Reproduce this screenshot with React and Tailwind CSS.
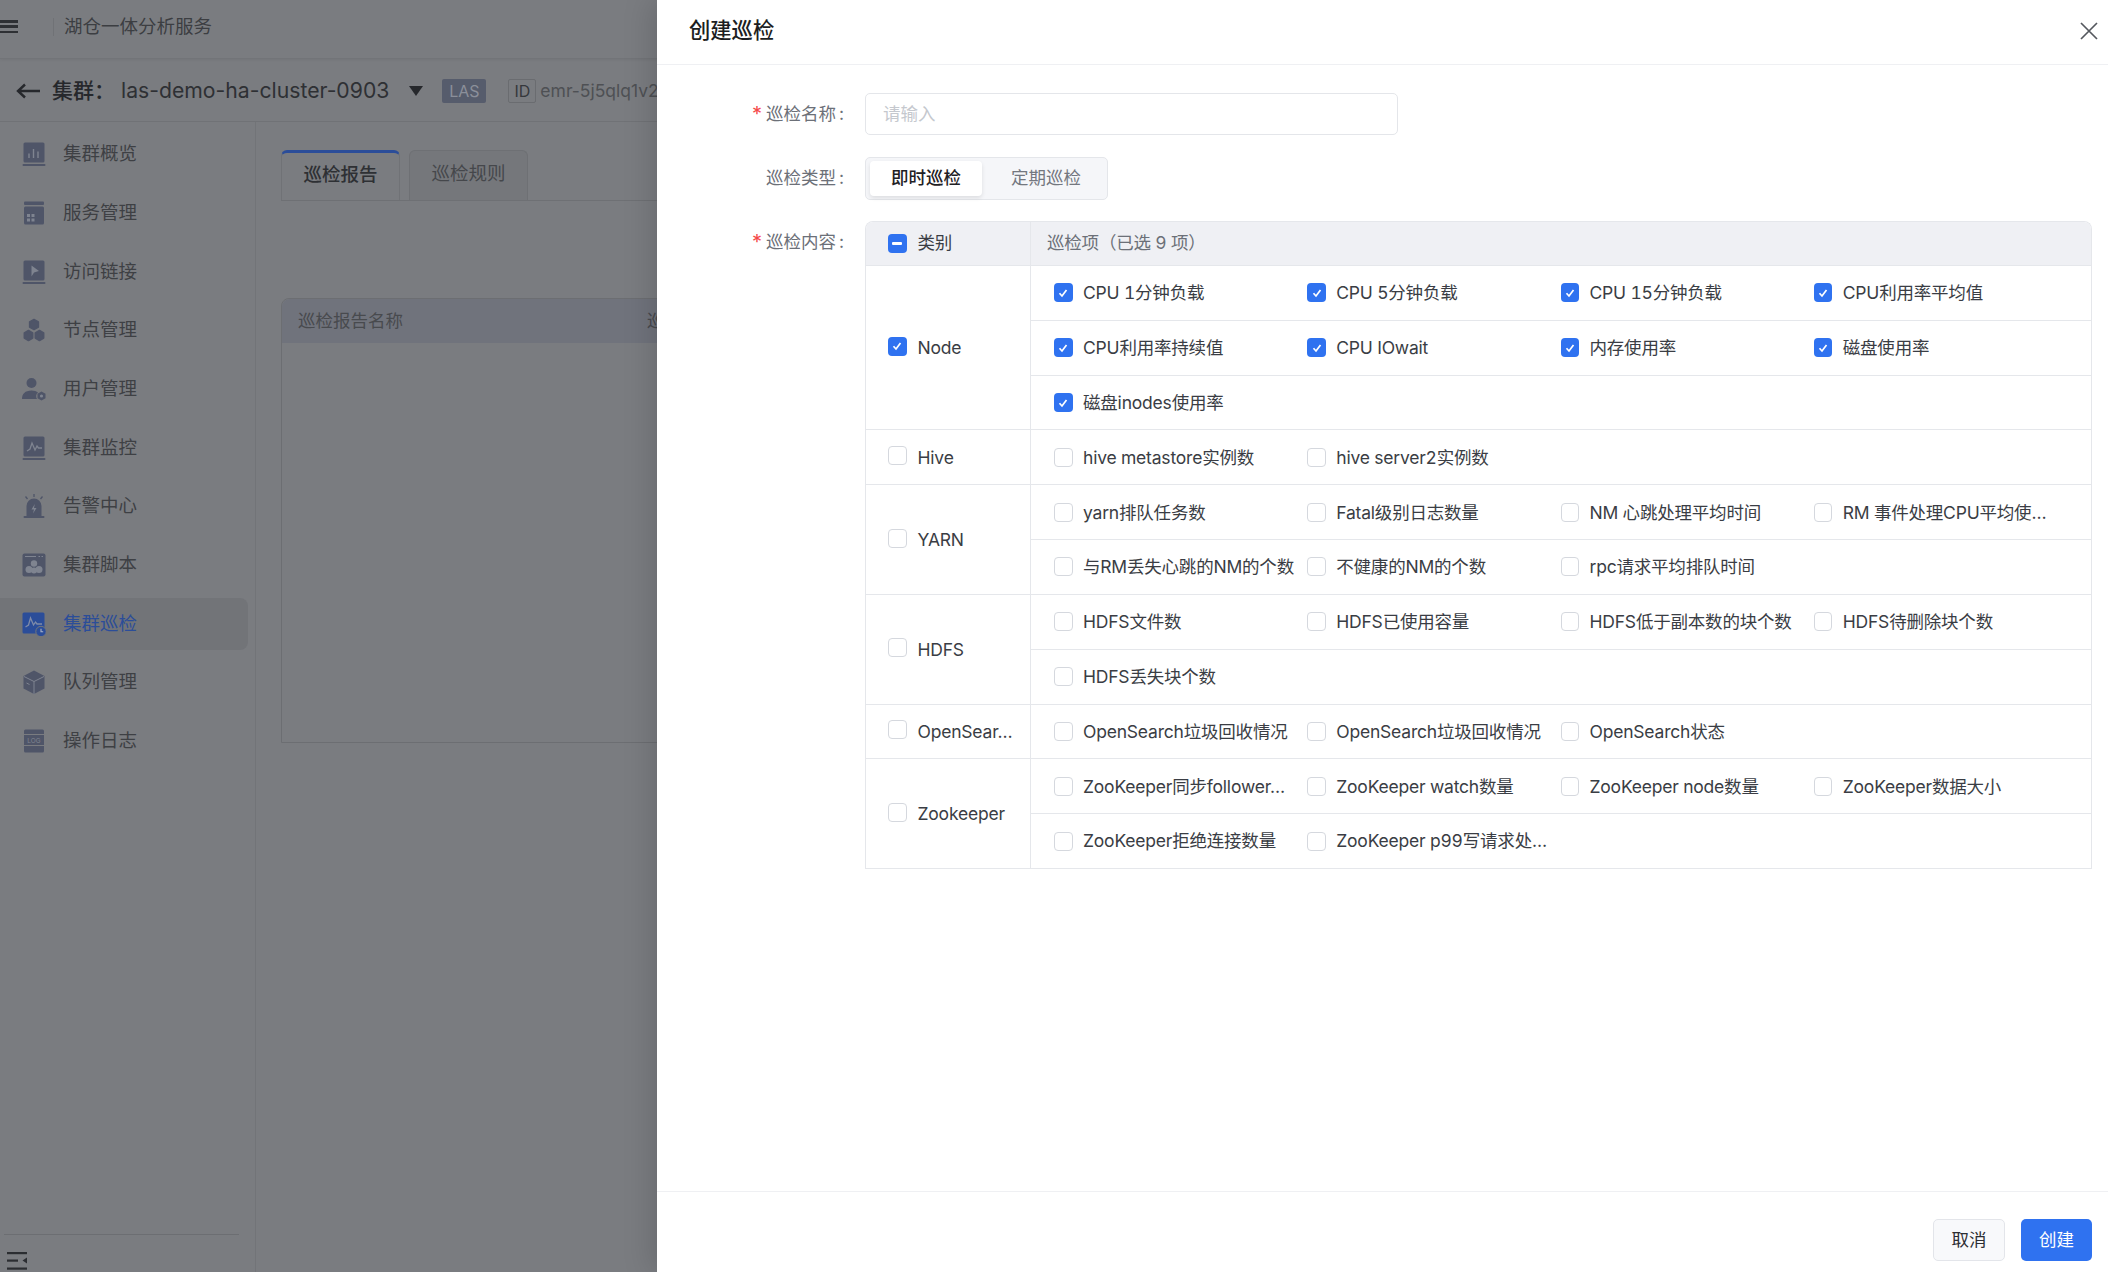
import React from "react";

const ic = "#4f5568";
const Rect = ({ c, children, base }) => (
  <svg width="24" height="24" viewBox="0 0 24 24" fill="none">
    <rect x="1.5" y="0.5" width="21" height={base ? 20 : 22} rx="1.5" fill={c} />
    {base && <rect x="0.5" y="22" width="23" height="2" rx="1" fill={c} />}
    {children}
  </svg>
);
const L = "#7f8490";
const Icons = {
  overview: (
    <Rect c={ic} base>
      <path d="M7 11.5v4.5M11.5 7v9M16 9.5V16" stroke={L} strokeWidth="1.4" />
    </Rect>
  ),
  service: (
    <svg width="24" height="24" viewBox="0 0 24 24">
      <rect x="2" y="0.5" width="20" height="3.5" rx="1" fill={ic} />
      <rect x="2" y="5.5" width="20" height="18" rx="1.5" fill={ic} />
      <path d="M5 13h3v3H5zM9.5 13h3v3h-3zM5 17.5h3v3H5zM9.5 17.5h3v3h-3z" fill={L} />
    </svg>
  ),
  link: (
    <Rect c={ic} base>
      <path d="M9.5 5.5 17 11l-5 1.5-2.5 4z" fill={L} />
    </Rect>
  ),
  node: (
    <svg width="24" height="24" viewBox="0 0 24 24" fill={ic} stroke={ic} strokeWidth="1.500" strokeLinejoin="round">
      <path d="M12 1.500l4.400 2.500v5L12 11.500 7.600 9V4z" />
      <path d="M6.500 12.500l4.200 2.500v5l-4.200 2.500-4.200-2.500v-5z" />
      <path d="M17.500 12.500l4.200 2.500v5l-4.200 2.500-4.200-2.500v-5z" />
    </svg>
  ),
  user: (
    <svg width="24" height="24" viewBox="0 0 24 24" fill={ic}>
      <circle cx="9.5" cy="6" r="5" />
      <path d="M0 22c0-5 3-8.5 9.500-8.500 3 0 5 .7 6.500 2-2 1.500-2.500 4.500-1 6.500z" />
      <path d="M19.500 14.500l4 2.300v4.500l-4 2.300-4-2.300v-4.500z" />
      <circle cx="19.500" cy="19" r="1.600" fill={L} />
    </svg>
  ),
  monitor: (
    <Rect c={ic} base>
      <path d="M5 15l3-2 2-6 3 7 2-4 1.500 2H20" stroke={L} strokeWidth="1.300" fill="none" />
    </Rect>
  ),
  alarm: (
    <svg width="24" height="24" viewBox="0 0 24 24" fill={ic}>
      <path d="M12 0v3M3.500 2.500l2 2.500M20.500 2.500l-2 2.500" stroke={ic} strokeWidth="1.300" />
      <path d="M4.500 22V12a7.500 7.500 0 0 1 15 0v10z" />
      <rect x="1.500" y="22" width="21" height="2" rx="1" />
      <path d="M12.800 10L9.500 15.500h2.500L11 19.500l3.500-5.500H12z" fill={L} />
    </svg>
  ),
  script: (
    <svg width="24" height="24" viewBox="0 0 24 24" fill={ic}>
      <rect x="0.500" y="0.500" width="23" height="23" rx="2" />
      <path d="M3 3.500h11M16.500 3.500h1.500M19.500 3.500h1.500" stroke={L} strokeWidth="1.200" />
      <circle cx="12" cy="10.500" r="3.200" fill={L} />
      <circle cx="7" cy="16.500" r="3.500" fill={L} />
      <circle cx="17" cy="16.500" r="3.500" fill={L} />
      <circle cx="12" cy="17.500" r="3" fill={L} />
    </svg>
  ),
  inspect: (
    <svg width="24" height="24" viewBox="0 0 24 24">
      <rect x="0.500" y="0.500" width="22" height="21" rx="1.500" fill="#2b4d99" />
      <path d="M3.500 15l3-2 2-7 3 7 2-3 1.500 2H20" stroke="#7f8ba8" strokeWidth="1.300" fill="none" />
      <circle cx="19" cy="19.500" r="5.200" fill="#2b4d99" stroke="#74777c" strokeWidth="1" />
      <path d="M19 16.800v3h2.200" stroke="#a9b3c9" strokeWidth="1.100" fill="none" />
    </svg>
  ),
  queue: (
    <svg width="24" height="24" viewBox="0 0 24 24">
      <path d="M12 0.500l10.500 5.500v12.500L12 24 1.500 18.500V6z" fill={ic} />
      <path d="M2 6.500l10 5 10-5M12 11.500V24M4.500 13l3 1.500" stroke={L} strokeWidth="1" fill="none" />
    </svg>
  ),
  log: (
    <svg width="24" height="24" viewBox="0 0 24 24" fill={ic}>
      <path d="M3.500 0.500h17a1.500 1.500 0 0 1 1.500 1.500v3H2V2A1.500 1.500 0 0 1 3.500 0.500z" />
      <rect x="2" y="6" width="20" height="10" />
      <path d="M2 17h20v5a1.500 1.500 0 0 1-1.500 1.500h-17A1.500 1.500 0 0 1 2 22z" />
      <text x="12" y="13.500" fontSize="6.500" textAnchor="middle" fill={L} fontFamily="Inter, sans-serif">LOG</text>
    </svg>
  ),
};

const nav = [
  ["集群概览", "overview"],
  ["服务管理", "service"],
  ["访问链接", "link"],
  ["节点管理", "node"],
  ["用户管理", "user"],
  ["集群监控", "monitor"],
  ["告警中心", "alarm"],
  ["集群脚本", "script"],
  ["集群巡检", "inspect", true],
  ["队列管理", "queue"],
  ["操作日志", "log"],
];

const groups = [
  { name: "Node", checked: true, rows: [
    ["CPU 1分钟负载", "CPU 5分钟负载", "CPU 15分钟负载", "CPU利用率平均值"],
    ["CPU利用率持续值", "CPU IOwait", "内存使用率", "磁盘使用率"],
    ["磁盘inodes使用率"],
  ]},
  { name: "Hive", rows: [["hive metastore实例数", "hive server2实例数"]] },
  { name: "YARN", rows: [
    ["yarn排队任务数", "Fatal级别日志数量", "NM 心跳处理平均时间", "RM 事件处理CPU平均使…"],
    ["与RM丢失心跳的NM的个数", "不健康的NM的个数", "rpc请求平均排队时间"],
  ]},
  { name: "HDFS", rows: [
    ["HDFS文件数", "HDFS已使用容量", "HDFS低于副本数的块个数", "HDFS待删除块个数"],
    ["HDFS丢失块个数"],
  ]},
  { name: "OpenSear…", rows: [["OpenSearch垃圾回收情况", "OpenSearch垃圾回收情况", "OpenSearch状态"]] },
  { name: "Zookeeper", rows: [
    ["ZooKeeper同步follower…", "ZooKeeper watch数量", "ZooKeeper node数量", "ZooKeeper数据大小"],
    ["ZooKeeper拒绝连接数量", "ZooKeeper p99写请求处…"],
  ]},
];

function Check({ on, partial, className = "" }) {
  if (on || partial)
    return (
      <span className={`flex h-[19px] w-[18.500px] shrink-0 items-center justify-center rounded-[4px] bg-[#2f72f0] ${className}`}>
        {on ? (
          <svg width="12" height="12" viewBox="0 0 12 12" fill="none">
            <path d="M2.500 6.200 5 9l4.500-6" stroke="#fff" strokeWidth="1.700" />
          </svg>
        ) : (
          <span className="h-[3px] w-[10px] rounded-[1px] bg-white" />
        )}
      </span>
    );
  return <span className={`block h-[19px] w-[18.500px] shrink-0 rounded-[4px] border-[1.5px] border-[#d5d8de] bg-white ${className}`} />;
}

function Label({ req, children }) {
  return (
    <div className="flex h-[42px] w-[186px] shrink-0 items-center justify-end text-[17.500px] text-[#6c7078]">
      {req && <span className="mr-[4px] text-[20px] leading-none text-[#f5484a]">*</span>}
      {children}
      <span className="ml-[3px] mr-[-1px]">:</span>
    </div>
  );
}

export default function App() {
  return (
    <div className="relative flex h-[1272px] w-[2108px] flex-col overflow-hidden bg-[#7a7c80] font-[Inter,'Noto_Sans_CJK_SC',sans-serif] text-[#36383c]">
      {/* top bar */}
      <div className="flex h-[59px] shrink-0 items-center border-b border-[#727478] pb-[5px] shadow-[0_1px_3px_rgba(0,0,0,0.06)]">
        <div className="flex h-[13px] w-[18px] flex-col justify-between">
          <span className="h-[2.500px] bg-[#2e3034]" />
          <span className="h-[2.500px] bg-[#2e3034]" />
          <span className="h-[2.500px] bg-[#2e3034]" />
        </div>
        <span className="ml-[35px] h-[18px] w-px bg-[#707276]" />
        <span className="ml-[10px] text-[18.500px] text-[#3c3e42]">湖仓一体分析服务</span>
      </div>
      {/* cluster bar */}
      <div className="flex h-[63px] shrink-0 items-center whitespace-nowrap border-b border-[#707276] pt-[2px]">
        <svg className="ml-[16px]" width="24" height="16" viewBox="0 0 24 16" fill="none">
          <path d="M24 8H2M9 1.500 2 8l7 6.500" stroke="#26282c" strokeWidth="2.400" />
        </svg>
        <span className="ml-[12px] text-[21px] font-medium text-[#26282c]">集群：</span>
        <span className="ml-[6px] text-[21.200px] text-[#2e3034]">las-demo-ha-cluster-0903</span>
        <span className="ml-[20px] h-0 w-0 border-x-[7px] border-t-[10px] border-x-transparent border-t-[#26282c]" />
        <span className="ml-[19px] flex h-[24px] w-[44px] items-center justify-center rounded-[2px] bg-[#565c6c] text-[16px] text-[#8b8f9a]">LAS</span>
        <span className="ml-[22px] flex h-[24px] w-[28px] items-center justify-center rounded-[2px] border border-[#6a6c70] text-[16px] text-[#36383c]">ID</span>
        <span className="ml-[4px] text-[17.500px] text-[#4e5054]">emr-5j5qlq1v2</span>
      </div>
      <div className="flex min-h-0 flex-1">
        {/* sidebar */}
        <aside className="flex w-[256px] shrink-0 flex-col border-r border-[#727478] pt-[3px]">
          {nav.map(([t, k, active]) => (
            <div key={t} className="flex h-[58.670px] items-center">
              <div className={`flex h-[52px] w-[248px] items-center gap-[17px] rounded-r-lg pl-[22px] text-[18.500px] ${active ? "bg-[#727478] text-[#2b4d99]" : "text-[#3e4044]"}`}>
                {Icons[k]}
                <span>{t}</span>
              </div>
            </div>
          ))}
          <div className="flex-1" />
          <div className="ml-[4px] h-[38px] w-[235px] border-t border-[#6c6e72] pl-[3px] pt-[17px]">
            <svg width="21" height="20" viewBox="0 0 21 20" fill="#2b2d31">
              <rect x="0" y="0" width="20" height="2.200" />
              <rect x="0" y="7.500" width="11" height="2.200" />
              <path d="M15.500 8.500 20 5.500v6z" />
              <rect x="0" y="15.500" width="20" height="2.200" />
            </svg>
          </div>
        </aside>
        {/* content */}
        <main className="flex-1 pl-[25px] pt-[29px]">
          <div className="flex h-[50px] items-end gap-[9px] border-b border-[#6e7074]">
            <div className="flex h-[50px] w-[119px] items-center justify-center rounded-t-md border-x border-[#707276] border-t-[3px] border-t-[#2b4d99] bg-[#7a7c80] pb-[3px] text-[18.500px] font-medium text-[#2e3034]">巡检报告</div>
            <div className="flex h-[50px] w-[119px] items-center justify-center rounded-t-md border-x border-t border-[#6e7074] bg-[#75777b] pb-[3px] text-[18.500px] text-[#45474b]">巡检规则</div>
          </div>
          <div className="mt-[97px] h-[445px] w-[900px] rounded-t-lg border border-[#6c6e72]">
            <div className="flex h-[44px] items-center rounded-t-lg bg-[#70737c] pl-[16px] text-[17.500px] text-[#484a4e]">
              <span className="w-[349px]">巡检报告名称</span>
              <span>巡检状态</span>
            </div>
          </div>
        </main>
      </div>

      {/* drawer */}
      <section className="absolute inset-y-0 right-0 flex w-[1451px] flex-col bg-white shadow-[-6px_0_28px_rgba(0,0,0,0.14)]">
        <header className="flex h-[65px] shrink-0 items-center justify-between border-b border-[#eff0f3] pb-[2px] pl-[32px] pr-[10px]">
          <h1 className="text-[21.300px] font-medium text-[#1c1e22]">创建巡检</h1>
          <svg width="18" height="18" viewBox="0 0 18 18" fill="none">
            <path d="M1 1l16 16M17 1 1 17" stroke="#55585e" strokeWidth="1.700" />
          </svg>
        </header>
        <div className="flex flex-1 flex-col pt-[28px] pr-[16px]">
          <div className="flex items-center gap-[22px]">
            <Label req>巡检名称</Label>
            <div className="flex h-[42px] w-[533px] items-center rounded-[5px] border border-[#e4e6ea] pl-[17px] text-[17.500px] text-[#c5c8ce]">请输入</div>
          </div>
          <div className="mt-[22px] flex items-center gap-[22px]">
            <Label>巡检类型</Label>
            <div className="flex h-[43px] w-[243px] items-center rounded-[5px] border border-[#e4e6ea] bg-[#f5f6f9] pl-[4px] text-[17.500px]">
              <span className="flex h-[35px] w-[112px] items-center justify-center rounded-[4px] bg-white font-medium text-[#1f2125] shadow-[0_2px_4px_rgba(0,0,0,0.1)]">即时巡检</span>
              <span className="ml-[29px] text-[#73777f]">定期巡检</span>
            </div>
          </div>
          <div className="mt-[21px] flex items-start gap-[22px]">
            <Label req>巡检内容</Label>
            <div className="flex-1 overflow-hidden rounded-t-lg border-x border-t border-[#e5e7eb] text-[17.500px] tabular-nums tracking-[-0.2px] text-[#3a3d44]">
              <div className="flex h-[44px] items-center border-b border-[#e5e7eb] bg-[#eff0f4]">
                <div className="flex h-full w-[165px] shrink-0 items-center gap-[11px] border-r border-[#e5e7eb] pl-[22px]">
                  <Check partial />
                  <span>类别</span>
                </div>
                <span className="pl-[16px] text-[#6c7078]">巡检项（已选 9 项）</span>
              </div>
              {groups.map((g) => (
                <div key={g.name} className="flex">
                  <div className="flex w-[165px] shrink-0 items-center gap-[11px] border-b border-r border-[#e5e7eb] pl-[22px]">
                    <Check on={g.checked} className="-mt-[3px]" />
                    <span className="whitespace-nowrap pt-[1px]">{g.name}</span>
                  </div>
                  <div className="flex-1">
                    {g.rows.map((r, i) => (
                      <div key={i} className="grid h-[54.820px] grid-cols-4 items-center border-b border-[#e5e7eb] pl-[23px] pr-[24px]">
                        {r.map((t, j) => (
                          <div key={j} className="flex items-center gap-[10.500px] whitespace-nowrap">
                            <Check on={g.checked} />
                            <span className="pt-[1px]">{t}</span>
                          </div>
                        ))}
                      </div>
                    ))}
                  </div>
                </div>
              ))}
            </div>
          </div>
        </div>
        <footer className="flex h-[81px] shrink-0 items-center justify-end gap-[16px] border-t border-[#eff0f3] pr-[16px] pt-[16px] text-[17.500px]">
          <span className="flex h-[42px] w-[72px] items-center justify-center rounded-[5px] border border-[#e3e5ea] bg-[#f8f9fb] text-[#2c2e33]">取消</span>
          <span className="flex h-[42px] w-[71px] items-center justify-center rounded-[5px] bg-[#2f72f0] text-white">创建</span>
        </footer>
      </section>
    </div>
  );
}
